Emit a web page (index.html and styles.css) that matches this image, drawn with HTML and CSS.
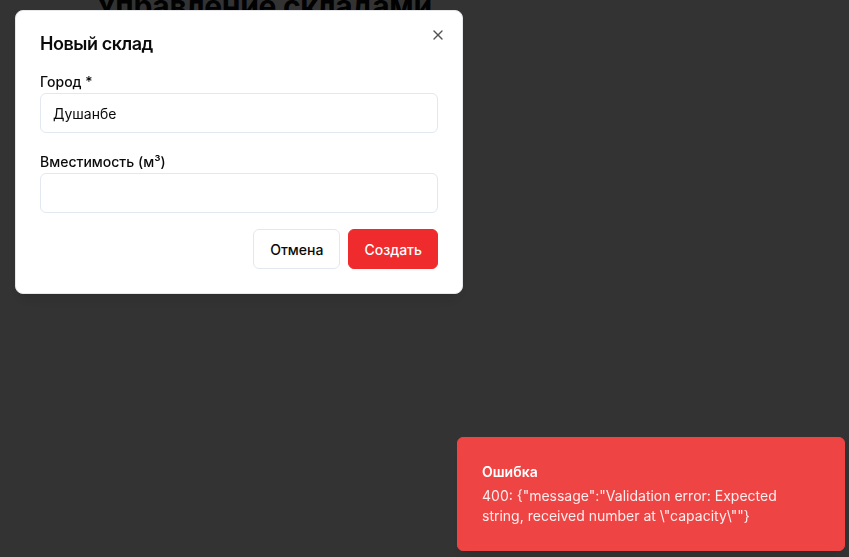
FILE: index.html
```html
<!DOCTYPE html>
<html lang="ru">
<head>
<meta charset="utf-8">
<title>Новый склад</title>
<link rel="stylesheet" href="styles.css">
</head>
<body>
<main class="page">
  <h1 class="page-title">Управление складами</h1>
</main>
<div class="overlay"></div>
<div class="dialog" role="dialog">
  <h2 class="dialog-title">Новый склад</h2>
  <form class="form">
    <div class="field">
      <label class="label">Город *</label>
      <input class="input" type="text" value="Душанбе">
    </div>
    <div class="field">
      <label class="label">Вместимость (м³)</label>
      <input class="input" type="text" value="">
    </div>
    <div class="actions">
      <button type="button" class="btn btn-outline">Отмена</button>
      <button type="button" class="btn btn-primary">Создать</button>
    </div>
  </form>
  <button type="button" class="close" aria-label="Закрыть">
    <svg width="16" height="16" viewBox="0 0 24 24" fill="none" stroke="currentColor" stroke-width="2" stroke-linecap="round" stroke-linejoin="round"><path d="M18 6 6 18"/><path d="m6 6 12 12"/></svg>
  </button>
</div>
<div class="toast">
  <div class="toast-title">Ошибка</div>
  <div class="toast-desc">400: {"message":"Validation error: Expected string, received number at \"capacity\""}</div>
</div>
</body>
</html>
```

FILE: styles.css
```css
* { box-sizing: border-box; }
html, body { margin: 0; padding: 0; }
body {
  background: #ffffff;
  font-family: Inter, "Noto Sans", sans-serif;
  color: #0a0a0a;
  width: 849px;
  height: 557px;
  overflow: hidden;
}
.page {
  margin-top: -12px;
  padding-left: 96px;
}
.page-title {
  margin: 0;
  font-size: 30px;
  line-height: 36px;
  font-weight: 700;
  letter-spacing: -0.3px;
  color: #0a0a0a;
}
.overlay {
  position: fixed;
  inset: 0;
  background: rgba(0, 0, 0, 0.8);
}
.dialog {
  position: fixed;
  left: 15px;
  top: 10px;
  width: 448px;
  background: #ffffff;
  border: 1px solid #e5e7eb;
  border-radius: 8px;
  padding: 24px;
  box-shadow: 0 10px 15px -3px rgba(0,0,0,0.1), 0 4px 6px -4px rgba(0,0,0,0.1);
}
.dialog-title {
  margin: 0 0 22px;
  font-size: 18px;
  line-height: 18px;
  font-weight: 600;
  letter-spacing: -0.45px;
  color: #0a0a0a;
}
.form {
  display: flex;
  flex-direction: column;
  gap: 22px;
}
.field {
  display: flex;
  flex-direction: column;
  gap: 4px;
}
.label {
  font-size: 14px;
  line-height: 14px;
  font-weight: 500;
  color: #0a0a0a;
}
.input {
  height: 40px;
  width: 100%;
  border: 1px solid #e2e8f0;
  border-radius: 6px;
  padding: 0 12px;
  font-family: inherit;
  font-size: 14px;
  color: #0a0a0a;
  background: #ffffff;
  outline: none;
}
.actions {
  display: flex;
  justify-content: flex-end;
  gap: 8px;
  margin-top: -6px;
}
.btn {
  height: 40px;
  padding: 0 16px;
  border-radius: 6px;
  font-family: inherit;
  font-size: 14px;
  font-weight: 500;
  cursor: pointer;
}
.btn-outline {
  background: #ffffff;
  border: 1px solid #e2e8f0;
  color: #0a0a0a;
}
.btn-primary {
  padding: 0 15px;
  background: #ef2b2d;
  border: 1px solid #ef2b2d;
  color: #ffffff;
}
.close {
  position: absolute;
  top: 16px;
  right: 16px;
  width: 16px;
  height: 16px;
  padding: 0;
  border: 0;
  background: transparent;
  color: #0a0a0a;
  opacity: 0.7;
  display: flex;
}
.toast {
  position: fixed;
  left: 457px;
  top: 437px;
  width: 388px;
  background: #ef4444;
  border: 1px solid #ef4444;
  border-radius: 6px;
  padding: 24px 32px 24px 24px;
  color: #ffffff;
  display: flex;
  flex-direction: column;
  gap: 4px;
  box-shadow: 0 10px 15px -3px rgba(0,0,0,0.1), 0 4px 6px -4px rgba(0,0,0,0.1);
}
.toast-title {
  font-size: 14px;
  line-height: 20px;
  font-weight: 600;
}
.toast-desc {
  font-size: 14px;
  line-height: 20px;
  opacity: 0.9;
}
```
